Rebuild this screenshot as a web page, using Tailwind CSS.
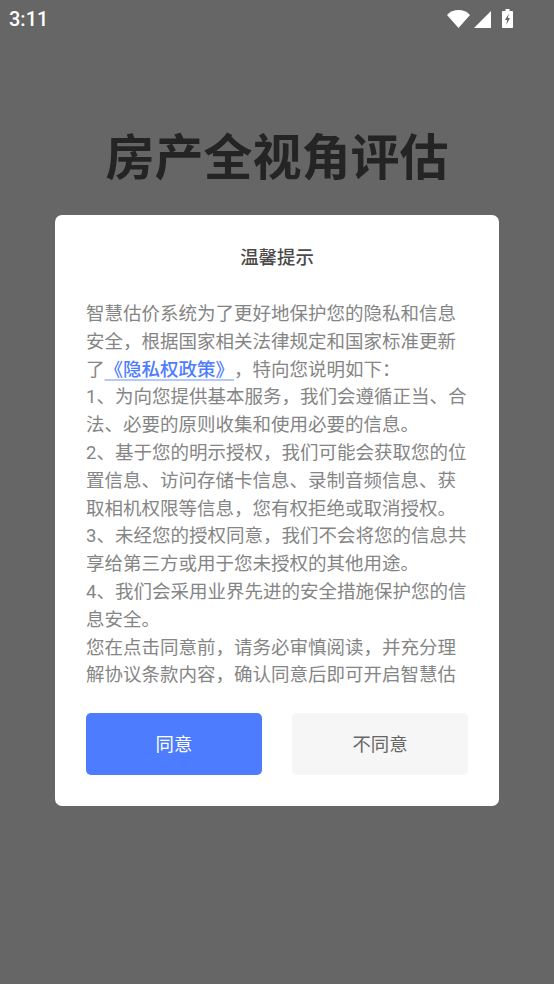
<!DOCTYPE html>
<html lang="zh-CN">
<head>
  <meta charset="UTF-8">
  <meta name="viewport" content="width=device-width, initial-scale=1.0">
  <title>房产全视角评估</title>
  <script src="https://cdn.jsdelivr.net/npm/@tailwindcss/browser@4"></script>
</head>
<body class="relative w-[554px] h-[984px] overflow-hidden bg-[#666666] font-['Roboto','Noto_Sans_CJK_SC',sans-serif] [text-spacing-trim:space-all]">
  <!-- status bar -->
  <div class="flex items-center justify-between h-[36px] pl-[9px] pr-[41px] text-white">
    <span class="text-[20px] font-medium leading-none mt-[2px]">3:11</span>
    <div class="flex items-end">
      <svg class="w-[23px] h-[18px]" viewBox="0 0 23 18"><path d="M0 5C3 1.800 7 0 11.500 0S20 1.800 23 5L11.500 18Z" fill="#fff"/></svg>
      <svg class="w-[17px] h-[17px] ml-[4px]" viewBox="0 0 17 17"><path d="M17 0V17H0Z" fill="#fff"/></svg>
      <svg class="w-[11px] h-[19px] ml-[11px]" viewBox="0 0 11 19"><path d="M3.500 0H7.500V2H10C10.600 2 11 2.400 11 3V18C11 18.600 10.600 19 10 19H1C.4 19 0 18.600 0 18V3C0 2.400 .4 2 1 2H3.500Z" fill="#fff"/><path d="M7 4.500L3 11H5.200L4.200 16L8 9H5.800Z" fill="#666"/></svg>
    </div>
  </div>

  <h1 class="mt-[93px] text-center text-[49px] leading-[60px] font-bold text-[#242424]">房产全视角评估</h1>

  <!-- dialog over the page -->
  <div class="absolute left-[55px] top-[215px] w-[444px] h-[591px] bg-white rounded-[7px] flex flex-col px-[31px]">
    <h2 class="mt-[29px] h-[28px] text-center text-[18.4px] leading-[28px] font-medium text-[#4a4a4a]">温馨提示</h2>
    <div class="mt-[29px] h-[387px] overflow-hidden text-[18.5px] leading-[27.8px] text-[#858585]">
      <p>智慧估价系统为了更好地保护您的隐私和信息安全，根据国家相关法律规定和国家标准更新了<a class="text-[#4d7cfe] font-medium underline decoration-2 decoration-[#b3c8fe] underline-offset-[3px]">《隐私权政策》</a>，特向您说明如下：</p>
      <p>1、为向您提供基本服务，我们会遵循正当、合法、必要的原则收集和使用必要的信息。</p>
      <p>2、基于您的明示授权，我们可能会获取您的位置信息、访问存储卡信息、录制音频信息、获取相机权限等信息，您有权拒绝或取消授权。</p>
      <p>3、未经您的授权同意，我们不会将您的信息共享给第三方或用于您未授权的其他用途。</p>
      <p>4、我们会采用业界先进的安全措施保护您的信息安全。</p>
      <p>您在点击同意前，请务必审慎阅读，并充分理解协议条款内容，确认同意后即可开启智慧估</p>
    </div>
    <div class="mt-[25px] flex justify-between">
      <button class="w-[176px] h-[62px] pt-[1px] rounded-[5px] bg-[#4d7cfe] text-white text-[18.4px]">同意</button>
      <button class="w-[176px] h-[62px] pt-[1px] rounded-[5px] bg-[#f6f6f6] text-[#666666] text-[18.4px]">不同意</button>
    </div>
  </div>
</body>
</html>
